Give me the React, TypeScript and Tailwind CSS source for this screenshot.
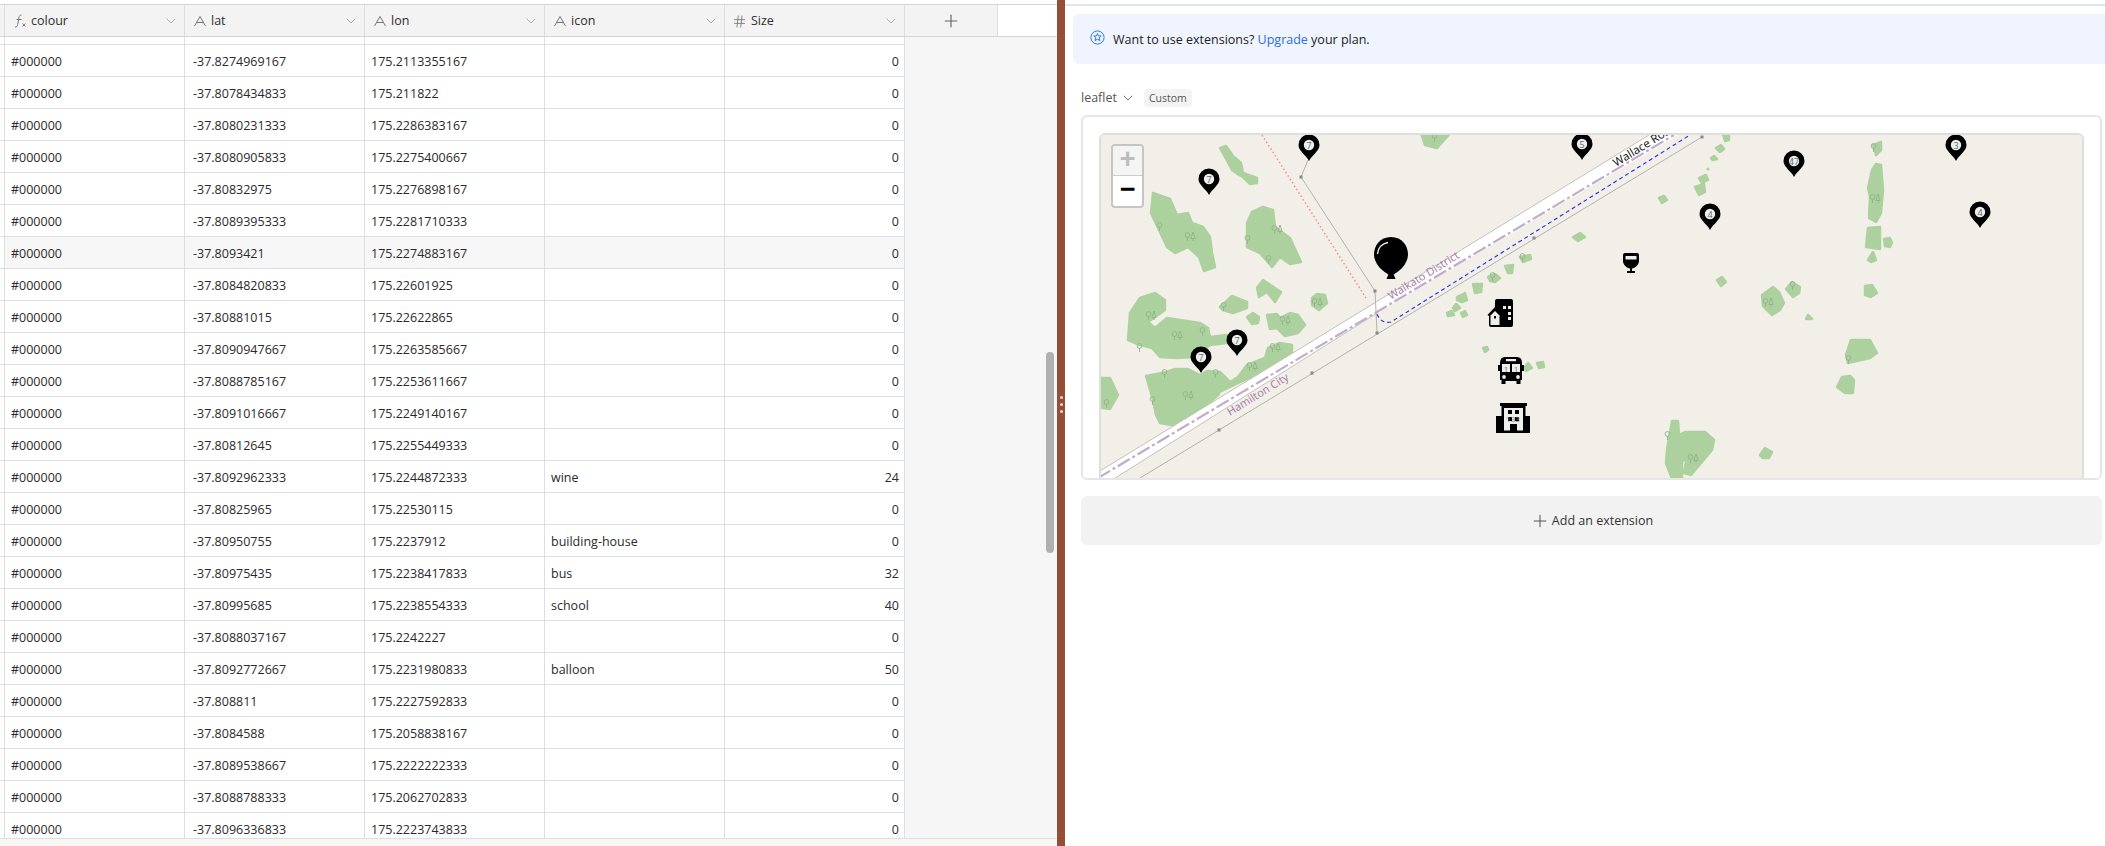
import { ChevronDown, Hash, Plus } from 'lucide-react';

type Row = { lat: string; lon: string; icon?: string; size?: number };

const rows: Row[] = [
  { lat: '-37.8274969167', lon: '175.2113355167' },
  { lat: '-37.8078434833', lon: '175.211822' },
  { lat: '-37.8080231333', lon: '175.2286383167' },
  { lat: '-37.8080905833', lon: '175.2275400667' },
  { lat: '-37.80832975', lon: '175.2276898167' },
  { lat: '-37.8089395333', lon: '175.2281710333' },
  { lat: '-37.8093421', lon: '175.2274883167' },
  { lat: '-37.8084820833', lon: '175.22601925' },
  { lat: '-37.80881015', lon: '175.22622865' },
  { lat: '-37.8090947667', lon: '175.2263585667' },
  { lat: '-37.8088785167', lon: '175.2253611667' },
  { lat: '-37.8091016667', lon: '175.2249140167' },
  { lat: '-37.80812645', lon: '175.2255449333' },
  { lat: '-37.8092962333', lon: '175.2244872333', icon: 'wine', size: 24 },
  { lat: '-37.80825965', lon: '175.22530115' },
  { lat: '-37.80950755', lon: '175.2237912', icon: 'building-house' },
  { lat: '-37.80975435', lon: '175.2238417833', icon: 'bus', size: 32 },
  { lat: '-37.80995685', lon: '175.2238554333', icon: 'school', size: 40 },
  { lat: '-37.8088037167', lon: '175.2242227' },
  { lat: '-37.8092772667', lon: '175.2231980833', icon: 'balloon', size: 50 },
  { lat: '-37.808811', lon: '175.2227592833' },
  { lat: '-37.8084588', lon: '175.2058838167' },
  { lat: '-37.8089538667', lon: '175.2222222333' },
  { lat: '-37.8088788333', lon: '175.2062702833' },
  { lat: '-37.8096336833', lon: '175.2223743833' },
];

// map drawing uses page coordinates, the svg viewBox lines up with the map box
const woods = [
  '1153,193 1170,199 1177,215 1188,213 1192,223 1203,227 1210,237 1212,253 1215,267 1204,271 1199,257 1188,247 1175,253 1167,247 1151,213',
  '1220,148 1226,146 1233,156 1241,163 1243,173 1257,178 1257,183 1250,184 1243,177 1239,175 1232,170 1225,157',
  '1252,212 1263,207 1273,210 1275,227 1290,238 1301,262 1290,264 1280,257 1272,267 1260,253 1247,247 1247,223',
  '1420,130 1453,130 1437,148 1425,145',
  '1128,340 1130,313 1140,298 1155,293 1165,300 1165,310 1148,322 1155,328 1167,318 1180,320 1200,323 1208,328 1210,337 1227,335 1227,343 1210,345 1193,357 1177,358 1160,357 1152,348 1140,345',
  '1146,376 1167,372 1175,369 1188,369 1200,375 1207,371 1220,372 1230,382 1238,377 1247,365 1265,358 1268,348 1280,343 1292,345 1292,353 1267,370 1240,382 1217,393 1219,394 1207,405 1177,426 1160,423 1156,415 1153,400',
  '1095,378 1110,378 1118,395 1110,409 1095,407',
  '1220,307 1232,296 1247,302 1247,308 1233,313 1223,310',
  '1257,288 1263,280 1281,292 1275,302 1267,292 1259,297',
  '1247,317 1253,313 1259,317 1258,323 1252,324',
  '1267,315 1277,314 1280,318 1290,313 1298,315 1305,325 1298,333 1285,336 1277,328 1270,329',
  '1312,298 1317,294 1325,295 1327,303 1319,310 1312,305',
  '1573,237 1580,233 1585,237 1578,241',
  '1520,257 1530,255 1531,259 1523,262',
  '1505,266 1513,265 1512,273 1508,273',
  '1488,277 1495,274 1500,278 1495,282 1490,281',
  '1473,284 1482,284 1481,292 1475,293',
  '1457,297 1465,293 1467,300 1462,302 1457,300',
  '1453,308 1456,304 1460,308 1455,311',
  '1447,313 1452,311 1454,315 1448,316',
  '1461,313 1465,311 1467,315 1463,317',
  '1483,348 1487,347 1488,350 1485,352',
  '1525,367 1528,363 1532,368 1526,371',
  '1537,363 1543,362 1544,367 1539,368',
  '1723,134 1729,134 1729,140 1725,141',
  '1716,148 1721,145 1724,149 1720,152',
  '1711,158 1714,156 1717,159 1713,160',
  '1699,178 1706,175 1708,180 1702,183',
  '1695,187 1704,184 1705,192 1699,195',
  '1659,198 1664,196 1667,200 1662,203',
  '1717,280 1722,277 1726,282 1721,286',
  '1762,295 1773,287 1779,292 1784,303 1780,310 1772,315 1763,306',
  '1786,289 1792,282 1800,287 1799,293 1793,297',
  '1865,286 1872,285 1877,293 1871,297 1865,295',
  '1806,319 1808,315 1812,319',
  '1851,340 1870,340 1877,353 1870,358 1848,363 1846,355',
  '1837,387 1842,377 1850,376 1854,380 1853,393 1845,393',
  '1760,455 1765,448 1772,452 1769,458 1763,458',
  '1672,421 1678,421 1679,435 1685,432 1705,432 1714,440 1712,450 1691,475 1684,473 1687,457 1682,462 1682,484 1674,484 1666,463 1667,450',
  '1873,145 1881,142 1881,150 1876,155',
  '1872,170 1876,164 1881,165 1883,190 1881,213 1876,222 1869,218 1870,197 1868,188',
  '1868,228 1880,227 1880,249 1866,247',
  '1884,239 1890,238 1892,243 1890,247 1885,246',
  '1868,260 1873,252 1876,260 1871,262',
];

const trees: [number, number, boolean][] = [
  [1162, 227, false], [1190, 237, true], [1250, 240, false], [1277, 230, true], [1271, 260, false],
  [1151, 316, true], [1177, 336, true], [1205, 332, false], [1142, 348, false], [1226, 307, false],
  [1285, 321, true], [1317, 303, true], [1252, 367, true], [1275, 348, true], [1167, 374, false],
  [1218, 374, false], [1188, 396, true], [1155, 401, false], [1109, 404, false], [1876, 148, false],
  [1875, 199, true], [1768, 303, true], [1795, 286, false], [1851, 360, false], [1670, 436, false],
  [1693, 459, true], [1495, 277, false], [1525, 258, false], [1437, 138, false],
];

const pins: [number, number, string][] = [
  [1309, 161, '7'], [1209, 195, '7'], [1582, 160, '5'], [1794, 177, '47'], [1956, 161, '3'],
  [1710, 230, '4'], [1980, 228, '4'], [1237, 356, '7'], [1201, 373, '7'],
];

const nodes = [
  [1301, 177], [1375, 291], [1377, 333], [1312, 373], [1219, 430], [1534, 238], [1702, 137],
];

function FxIcon() {
  return (
    <svg width="16" height="16" viewBox="0 0 16 16" fill="none" stroke="#777" strokeWidth="1">
      <path d="M9.5 2C7.8 2 7.2 3 6.9 4.6L5.7 11.6C5.4 13.2 4.8 14 3 14" />
      <path d="M4.5 6.5H9.5" />
      <path d="M10.5 10.5L13.5 13.5M13.5 10.5L10.5 13.5" strokeWidth="0.9" />
    </svg>
  );
}

function TextIcon() {
  return (
    <svg width="16" height="16" viewBox="0 0 16 16" fill="none" stroke="#777" strokeWidth="1">
      <path d="M2.5 13L8 3.5L13.5 13M4.6 9.5H11.4" />
    </svg>
  );
}

function HeaderCell({ icon, label }: { icon: React.ReactNode; label: string }) {
  return (
    <div className="w-[180px] shrink-0 border-r border-[#dcdee2] flex items-center pl-[7px] pr-[5px]">
      <span className="w-[19px] shrink-0 flex mt-[1px]">{icon}</span>
      <span className="flex-1 text-[#2f2f2f] mt-[2px]">{label}</span>
      <ChevronDown size={16} strokeWidth={1} className="text-[#888]" />
    </div>
  );
}

function TableRow({ row, hover }: { row: Row; hover: boolean }) {
  const bg = hover ? 'bg-[#f7f7f7]' : 'bg-white';
  return (
    <div className="flex h-8 shrink-0 border-b border-[#dcdee2] text-[#2a2a2a] leading-[33px]">
      <div className="w-[5px] border-r border-[#dcdee2] bg-white" />
      <div className={`w-[180px] border-r border-[#dcdee2] pl-[6px] ${bg}`}>#000000</div>
      <div className={`w-[180px] border-r border-[#dcdee2] pl-2 ${bg}`}>{row.lat}</div>
      <div className={`w-[180px] border-r border-[#dcdee2] pl-[6px] ${bg}`}>{row.lon}</div>
      <div className={`w-[180px] border-r border-[#dcdee2] pl-[6px] ${bg}`}>{row.icon}</div>
      <div className={`w-[180px] border-r border-[#dcdee2] pr-[5px] text-right ${bg}`}>{row.size ?? 0}</div>
    </div>
  );
}

function Tree({ x, y, double }: { x: number; y: number; double: boolean }) {
  return (
    <g stroke="#8fb388" strokeWidth="0.9" fill="none">
      <circle cx={x - 2.5} cy={y - 2} r="2.4" />
      <path d={`M${x - 2.5} ${y}V${y + 4}`} />
      {double && <path d={`M${x + 3} ${y - 5}L${x + 0.8} ${y + 1.5}H${x + 5.2}ZM${x + 3} ${y + 1.5}V${y + 4}`} />}
    </g>
  );
}

function Pin({ x, y, label }: { x: number; y: number; label: string }) {
  return (
    <g>
      <path
        d={`M${x} ${y}C${x - 3} ${y - 6} ${x - 10.5} ${y - 10} ${x - 10.5} ${y - 16}A10.5 10.5 0 1 1 ${x + 10.5} ${y - 16}C${x + 10.5} ${y - 10} ${x + 3} ${y - 6} ${x} ${y}Z`}
        fill="#000"
      />
      <circle cx={x} cy={y - 16} r="5.2" fill="#eeeeec" />
      <text x={x} y={y - 12} textAnchor="middle" fontSize="9" fill="#666" fontFamily="Open Sans, sans-serif">
        {label}
      </text>
    </g>
  );
}

function MapDrawing() {
  return (
    <svg width="981" height="343" viewBox="1101 135 981 343" className="block">
      <rect x="1101" y="135" width="981" height="343" fill="#f2efe9" />
      {woods.map((points, i) => (
        <polygon key={i} points={points} fill="#add19e" stroke="#add19e" strokeWidth="2.5" strokeLinejoin="round" />
      ))}
      <circle cx="1708" cy="169" r="1.6" fill="#add19e" />
      {trees.map(([x, y, double], i) => (
        <Tree key={i} x={x} y={y} double={double} />
      ))}

      {/* road and boundaries */}
      <polygon points="1095,474 1649,135 1678,135 1377,313 1115,478 1095,478" fill="#fff" />
      <path d="M1095 474L1649 135" stroke="#c4c0ba" strokeWidth="1" fill="none" />
      <path d="M1377 313L1112 480" stroke="#c4c0ba" strokeWidth="1" fill="none" />
      <path d="M1098 478L1674 135" stroke="#c4abc8" strokeWidth="2.2" strokeDasharray="14 3 3 3" fill="none" />
      <path d="M1377 314Q1381 324 1391 322L1690 135" stroke="#2a2ae6" strokeWidth="1.1" strokeDasharray="4 3" fill="none" />
      <path d="M1702 137L1140 478" stroke="#b5b1ab" strokeWidth="1" fill="none" />
      <path d="M1262 135L1366 298" stroke="#f88a80" strokeWidth="1.4" strokeDasharray="1.5 2.5" fill="none" />
      <path d="M1377 333Q1376 310 1375 291L1301 177L1308 160" stroke="#b5b1ab" strokeWidth="1" fill="none" />
      {nodes.map(([x, y], i) => (
        <rect key={i} x={x - 1.5} y={y - 1.5} width="3" height="3" fill="#888" />
      ))}

      <g fontFamily="Noto Sans, sans-serif" fontSize="11">
        <text transform="translate(1391 300) rotate(-31.6)" fill="#a67fa8">Waikato District</text>
        <text transform="translate(1230 416) rotate(-31.6)" fill="#a67fa8">Hamilton City</text>
        <text transform="translate(1616 167) rotate(-31.6)" fill="#222" fontSize="11.5">Wallace Road</text>
      </g>

      {pins.map(([x, y, label], i) => (
        <Pin key={i} x={x} y={y} label={label} />
      ))}

      {/* balloon */}
      <path d="M1391 237C1402 237 1408 245.500 1408 254.500C1408 264 1399 272.500 1391 275.500C1383 272.500 1374 264 1374 254.500C1374 245.500 1380 237 1391 237Z" fill="#000" />
      <path d="M1388.500 274H1393.500L1395.500 279H1386.500Z" fill="#000" />
      <path d="M1377.500 254C1378 248 1382 243.500 1388 242.500" stroke="#eee" strokeWidth="1.5" fill="none" />

      {/* wine */}
      <path d="M1625 253H1637Q1639 253 1639 255V261C1639 265 1635 268 1632 268.500V271H1635V273H1627V271H1630V268.500C1627 268 1623 265 1623 261V255Q1623 253 1625 253Z" fill="#000" />
      <rect x="1625.500" y="256" width="11" height="3.500" fill="#eeeeec" />

      {/* building-house */}
      <path d="M1497 299H1511Q1513 299 1513 301V325Q1513 327 1511 327H1491Q1489 327 1489 325V316L1487.500 315L1495 307V301Q1495 299 1497 299Z" fill="#000" />
      <path d="M1495 311L1490.500 315.500V325H1499.500V315.500Z" fill="#eeeeec" />
      <rect x="1494" y="316" width="2" height="2.500" fill="#000" />
      <rect x="1503" y="306" width="3" height="3" fill="#eeeeec" />
      <rect x="1508" y="306" width="3" height="3" fill="#eeeeec" />
      <rect x="1508" y="312" width="3" height="3" fill="#eeeeec" />
      <rect x="1508" y="317" width="3" height="3" fill="#eeeeec" />

      {/* bus */}
      <path d="M1505 357H1517Q1522 357 1522 363V365H1524V371H1522V380H1520.500V384H1516.500V381H1505.500V384H1501.500V380H1500V371H1498V365H1500V363Q1500 357 1505 357Z" fill="#000" />
      <rect x="1506" y="359" width="10" height="2.200" fill="#eeeeec" />
      <rect x="1502" y="364" width="8" height="8" fill="#eeeeec" />
      <rect x="1512" y="364" width="8" height="8" fill="#eeeeec" />
      <circle cx="1504" cy="377" r="1.900" fill="#eeeeec" />
      <circle cx="1518" cy="377" r="1.900" fill="#eeeeec" />
      <g fontFamily="Open Sans, sans-serif" fontSize="8" fill="#777" textAnchor="middle">
        <text x="1506" y="372">1</text>
        <text x="1516" y="372">1</text>
      </g>

      {/* school */}
      <path d="M1500 403H1527V406H1525.500V416H1530V433H1496V416H1501.500V406H1500Z" fill="#000" />
      <path d="M1504 408H1523V430.500H1517V424H1510V430.500H1504Z" fill="#eeeeec" />
      <rect x="1508" y="410" width="4" height="4" fill="#000" />
      <rect x="1515" y="410" width="4" height="4" fill="#000" />
      <rect x="1508" y="417" width="4" height="4" fill="#000" />
      <rect x="1515" y="417" width="4" height="4" fill="#000" />
      <text x="1513" y="422" textAnchor="middle" fontFamily="Open Sans, sans-serif" fontSize="8" fill="#777">133</text>
    </svg>
  );
}

function BannerIcon() {
  return (
    <svg width="15" height="15" viewBox="0 0 15 15" fill="none" stroke="#2f7be8" strokeWidth="1">
      <circle cx="7.5" cy="7.5" r="6.6" />
      <path d="M7.5 3.6L8.6 6H11.2L9.2 7.8L9.9 10.6L7.5 9.2L5.1 10.6L5.8 7.8L3.8 6H6.4Z" strokeLinejoin="round" />
    </svg>
  );
}

export default function App() {
  return (
    <div className="flex h-[846px] w-[2105px] overflow-hidden bg-white font-['Open_Sans',sans-serif] text-[12.5px]">
      {/* grid pane */}
      <div className="w-[1057px] shrink-0 flex flex-col">
        <div className="h-[4px] bg-white" />
        <div className="flex h-[33px] shrink-0 border-y border-y-[#d4d4d4] bg-[#f3f3f3]">
          <div className="w-[5px] shrink-0 border-r border-[#dcdee2]" />
          <HeaderCell icon={<FxIcon />} label="colour" />
          <HeaderCell icon={<TextIcon />} label="lat" />
          <HeaderCell icon={<TextIcon />} label="lon" />
          <HeaderCell icon={<TextIcon />} label="icon" />
          <HeaderCell icon={<Hash size={15} strokeWidth={1.4} className="text-[#777]" />} label="Size" />
          <div className="w-[93px] shrink-0 border-r border-[#dcdee2] flex items-center justify-center">
            <Plus size={20} strokeWidth={1.4} className="text-[#666]" />
          </div>
          <div className="flex-1 bg-white" />
        </div>
        <div className="flex flex-1 min-h-0">
          <div className="w-[905px] shrink-0 flex flex-col overflow-hidden">
            <div className="flex h-2 shrink-0 border-b border-[#dcdee2]">
              <div className="w-[5px] border-r border-[#dcdee2]" />
              <div className="w-[180px] border-r border-[#dcdee2]" />
              <div className="w-[180px] border-r border-[#dcdee2]" />
              <div className="w-[180px] border-r border-[#dcdee2]" />
              <div className="w-[180px] border-r border-[#dcdee2]" />
              <div className="w-[180px] border-r border-[#dcdee2]" />
            </div>
            {rows.map((row, i) => (
              <TableRow key={row.lat} row={row} hover={i === 6} />
            ))}
          </div>
          <div className="flex-1 bg-[#f6f6f6] flex justify-end items-start pr-[3px] pt-[315px]">
            <div className="w-2 h-[201px] rounded-full bg-[#b0b0b0]" />
          </div>
        </div>
        <div className="h-2 shrink-0 border-t border-[#dcdee2] bg-[#f7f7f7]" />
      </div>

      {/* divider */}
      <div className="w-2 shrink-0 bg-[#954f38] flex flex-col items-center justify-center gap-1 pb-[38px]">
        <div className="w-[3px] h-[3px] rounded-full bg-[#ead9d2]" />
        <div className="w-[3px] h-[3px] rounded-full bg-[#ead9d2]" />
        <div className="w-[3px] h-[3px] rounded-full bg-[#ead9d2]" />
      </div>

      {/* extensions pane */}
      <div className="flex-1 flex flex-col min-w-0 text-[#333]">
        <div className="mt-1 h-[2px] bg-[#e5e5e5]" />
        <div className="mt-2 ml-2 h-[50px] flex items-center rounded-l-md bg-[#eff4fe] pl-[17px] text-[12.5px] text-[#222]">
          <span className="mr-[8px] -mt-1"><BannerIcon /></span>
          <span className="mt-[2px]">
            Want to use extensions? <span className="text-[#2b6fe0]">Upgrade</span> your plan.
          </span>
        </div>
        <div className="mt-[25px] ml-4 h-[18px] flex items-center text-[#555] text-[12.5px]">
          <span>leaflet</span>
          <ChevronDown size={16} strokeWidth={1.2} className="ml-[3px] text-[#555]" />
          <span className="ml-[8px] h-[18px] px-[5px] rounded bg-[#f3f3f3] text-[10.5px] leading-[19px] text-[#555]">Custom</span>
        </div>
        <div className="mt-2 ml-4 mr-[3px] h-[365px] rounded-md border-2 border-[#e6e6e6] px-4 pt-4">
          <div className="relative h-[345px] overflow-hidden rounded-t-md border-2 border-b-0 border-[#dedede]">
            <MapDrawing />
            <div className="absolute left-[10px] top-[9px] w-[33px] h-[64px] rounded border-[2px] border-[#c6c5c2] bg-white overflow-hidden font-['Liberation_Mono',monospace] font-bold text-[27px] leading-[30px] text-center">
              <div className="h-[30px] bg-[#f4f4f4] text-[#bbb] border-b border-[#ccc]">+</div>
              <div className="h-[30px] text-black">−</div>
            </div>
          </div>
        </div>
        <div className="mt-4 ml-4 mr-[3px] h-[49px] rounded-md bg-[#f2f2f2] flex items-center justify-center text-[12.5px] text-[#333]">
          <Plus size={20} strokeWidth={1.2} className="mr-[2px] text-[#555]" />
          <span className="mt-[2px]">Add an extension</span>
        </div>
      </div>
    </div>
  );
}
